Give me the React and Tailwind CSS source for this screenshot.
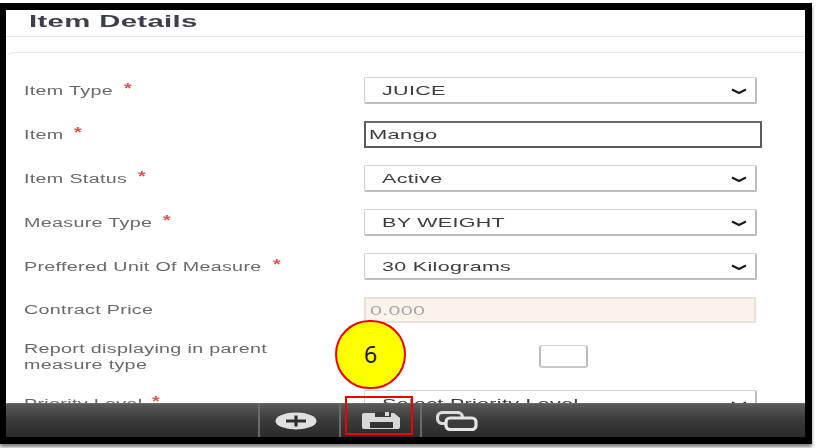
const fieldFont = { fontFamily: '"Liberation Sans", Arial, sans-serif' };

function Label({ text, star }) {
  return (
    <div className="w-[340px] shrink-0 flex items-center text-[#68686f] text-[12px] leading-[18px]">
      <span className="w-0 origin-left scale-x-[1.64] whitespace-nowrap tracking-[0.2px]">{text}</span>
      {star && (
        <span className="relative top-[-3px] origin-left scale-x-[1.4] text-[#e2534f] text-[14px] font-bold" style={{ marginLeft: star }}>*</span>
      )}
    </div>
  );
}

function Chevron() {
  return (
    <svg width="16" height="7" viewBox="0 0 16 7" className="absolute right-[8px] top-[10px]">
      <path d="M1 1.5 L8 5 L15 1.5" fill="none" stroke="#1c1c1c" strokeWidth="2.2" />
    </svg>
  );
}

function SelectBox({ value }) {
  return (
    <div className="relative w-[393px] h-[27px] bg-white rounded-[2px] border border-[#d0d0d0] border-r-2 border-b-2 border-r-[#bdbdbd] border-b-[#bdbdbd] flex items-center pl-[17px] pt-[2px]">
      <span className="origin-left scale-x-[1.65] text-[13px] text-[#3c3c40] whitespace-nowrap tracking-[0.2px]">{value}</span>
      <Chevron />
    </div>
  );
}

function Row({ label, star, children, className }) {
  return (
    <div className={`flex items-center ${className}`}>
      <Label text={label} star={star} />
      {children}
    </div>
  );
}

export default function App() {
  return (
    <div className="w-[817px] h-[448px] bg-white overflow-hidden relative" style={fieldFont}>
      <div className="mt-[3px] w-[812px] h-[441px] border-black border-t-[7px] border-l-[6px] border-r-[7px] border-b-[7px] bg-white flex flex-col shadow-[0_3px_3px_rgba(0,0,0,0.5)] overflow-hidden">
        <div className="flex-1 overflow-hidden blur-[0.5px]">
          <div className="h-[27px] border-b border-[#e4e4e4] pl-[23px] pt-[1px] flex items-start">
            <span className="origin-left scale-x-[1.83] text-[16px] leading-[22px] font-bold text-[#3a3f4a] tracking-[0.2px]">Item Details</span>
          </div>
          <div className="mt-[15px] h-[370px] border-t border-[#e8e8e8] rounded-tl-[8px] pl-[18px] pt-[24px]">
            <Row label="Item Type" star="100px" className="h-[27px]">
              <SelectBox value="JUICE" />
            </Row>
            <Row label="Item" star="50px" className="h-[27px] mt-[17px]">
              <div className="w-[398px] h-[27px] border-2 border-[#5a5a5a] border-t-[#6a6a6a] flex items-center pl-[3px] pt-[1px] bg-white">
                <span className="origin-left scale-x-[1.68] text-[13px] text-[#3c3c40] tracking-[0.2px]">Mango</span>
              </div>
            </Row>
            <Row label="Item Status" star="114px" className="h-[27px] mt-[17px]">
              <SelectBox value="Active" />
            </Row>
            <Row label="Measure Type" star="139px" className="h-[27px] mt-[17px]">
              <SelectBox value="BY WEIGHT" />
            </Row>
            <Row label="Preffered Unit Of Measure" star="249px" className="h-[27px] mt-[17px]">
              <SelectBox value="30 Kilograms" />
            </Row>
            <Row label="Contract Price" className="h-[26px] mt-[17px]">
              <div className="w-[392px] h-[26px] bg-[#fbf3ea] border-2 border-[#e4e0da] flex items-center pl-[4px] pt-[1px]">
                <span className="origin-left scale-x-[1.65] text-[13px] text-[#a8a8a8] tracking-[0.2px]">0.000</span>
              </div>
            </Row>
            <div className="flex h-[52px] mt-[15px]">
              <div className="w-[340px] shrink-0 text-[#68686f] text-[12px] leading-[16px] pt-[3px]">
                <div className="origin-left scale-x-[1.64] whitespace-nowrap tracking-[0.2px]">Report displaying in parent</div>
                <div className="origin-left scale-x-[1.64] whitespace-nowrap tracking-[0.2px]">measure type</div>
              </div>
              <div className="ml-[175px] mt-[7px] w-[49px] h-[23px] rounded-[3px] border border-[#d0d0d0] border-l-2 border-b-2 border-r-2 border-l-[#bbb] border-r-[#bbb] border-b-[#c8c8c8] bg-white" />
            </div>
            <Row label="Priority Level" star="128px" className="h-[27px]">
              <SelectBox value="Select Priority Level" />
            </Row>
          </div>
        </div>
        <div className="h-[34px] shrink-0 flex items-stretch bg-gradient-to-b from-[#5a5a5a] via-[#3a3a3a] to-[#2b2b2b] border-t border-[#6a6a6a] pl-[252px] relative z-10 blur-[0.4px]">
          <div className="w-[81px] border-l-2 border-[#6b6b6b] flex items-center justify-center pr-[8px]">
            <svg width="42" height="18" viewBox="0 0 42 18">
              <ellipse cx="21" cy="9" rx="20.5" ry="8.5" fill="#e0e0e0" />
              <path d="M11 9 H31 M21 3.5 V14.5" stroke="#2e2e2e" strokeWidth="3.2" />
            </svg>
          </div>
          <div className="w-[81px] border-l-2 border-[#6b6b6b] flex items-center justify-center">
            <svg width="38" height="17" viewBox="0 0 38 17">
              <path d="M0 3 Q0 1 2 1 H32 L38 6 V15 Q38 17 36 17 H2 Q0 17 0 15 Z" fill="#d8d8d8" />
              <path d="M13 0 H29 V5 H13 Z" fill="#3a3a3a" />
              <path d="M23 0 H27 V4 H23 Z" fill="#d8d8d8" />
              <path d="M8 10 H31 V16 H8 Z" fill="#333333" />
            </svg>
          </div>
          <div className="w-[81px] border-l-2 border-[#6b6b6b] flex items-center pl-[14px]">
            <svg width="42" height="20" viewBox="0 0 42 20">
              <rect x="1.5" y="1.5" width="25" height="11" rx="5" fill="none" stroke="#dcdcdc" strokeWidth="3.2" />
              <rect x="10" y="7" width="30" height="11.5" rx="4" fill="#3a3a3a" stroke="#e4e4e4" strokeWidth="3.2" />
            </svg>
          </div>
        </div>
      </div>

      <div className="absolute left-[335px] top-[320px] w-[71px] h-[69px] rounded-full bg-[#ffff00] border-2 border-[#f00000] flex items-center justify-center text-[23px] text-[#1a1a1a] z-20" style={{ fontFamily: '"Noto Sans", sans-serif' }}>
        6
      </div>
      <div className="absolute left-[345px] top-[396px] w-[68px] h-[39px] border-2 border-[#f00000] z-20" />
    </div>
  );
}
